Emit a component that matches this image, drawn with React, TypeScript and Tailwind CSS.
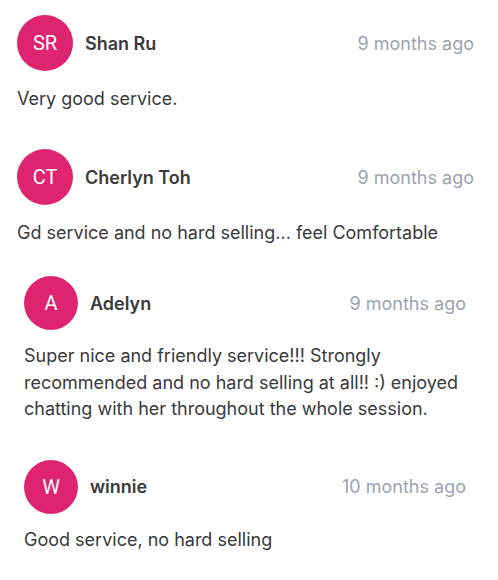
import React from "react";

type Review = {
  initials: string;
  name: string;
  time: string;
  text: string;
  inset?: boolean;
};

const reviews: Review[] = [
  { initials: "SR", name: "Shan Ru", time: "9 months ago", text: "Very good service." },
  {
    initials: "CT",
    name: "Cherlyn Toh",
    time: "9 months ago",
    text: "Gd service and no hard selling... feel Comfortable",
  },
  {
    initials: "A",
    name: "Adelyn",
    time: "9 months ago",
    text: "Super nice and friendly service!!! Strongly recommended and no hard selling at all!! :) enjoyed chatting with her throughout the whole session.",
    inset: true,
  },
  { initials: "W", name: "winnie", time: "10 months ago", text: "Good service, no hard selling", inset: true },
];

const ReviewItem = ({ r, className }: { r: Review; className?: string }) => (
  <div className={(r.inset ? "pl-[24px] pr-[32px] " : "pl-[17px] pr-[24px] ") + (className ?? "")}>
    <div className="flex items-center">
      <div
        className={
          (r.inset ? "w-[54px] h-[54px] " : "w-[56px] h-[56px] ") +
          "rounded-full bg-[#de2470] flex items-center justify-center text-white text-[20px] font-['Roboto',sans-serif]"
        }
      >
        {r.initials}
      </div>
      <div className="ml-[12px] text-[18px] font-semibold text-[#3a3a3a]">{r.name}</div>
      <div className="ml-auto text-[18px] text-[#9ca3af]">{r.time}</div>
    </div>
    <p
      className={
        (r.inset ? "mt-[13px] leading-[26.5px] " : "mt-[14px] leading-[27px] ") + "text-[18px] text-[#3a3a3a]"
      }
    >
      {r.text}
    </p>
  </div>
);

export default function App() {
  return (
    <div className="w-[498px] h-[580px] bg-white pt-[15px] font-['Inter',sans-serif] flex flex-col">
      <ReviewItem r={reviews[0]} className="mb-[37px]" />
      <ReviewItem r={reviews[1]} className="mb-[30px]" />
      <ReviewItem r={reviews[2]} className="mb-[37px]" />
      <ReviewItem r={reviews[3]} />
    </div>
  );
}
